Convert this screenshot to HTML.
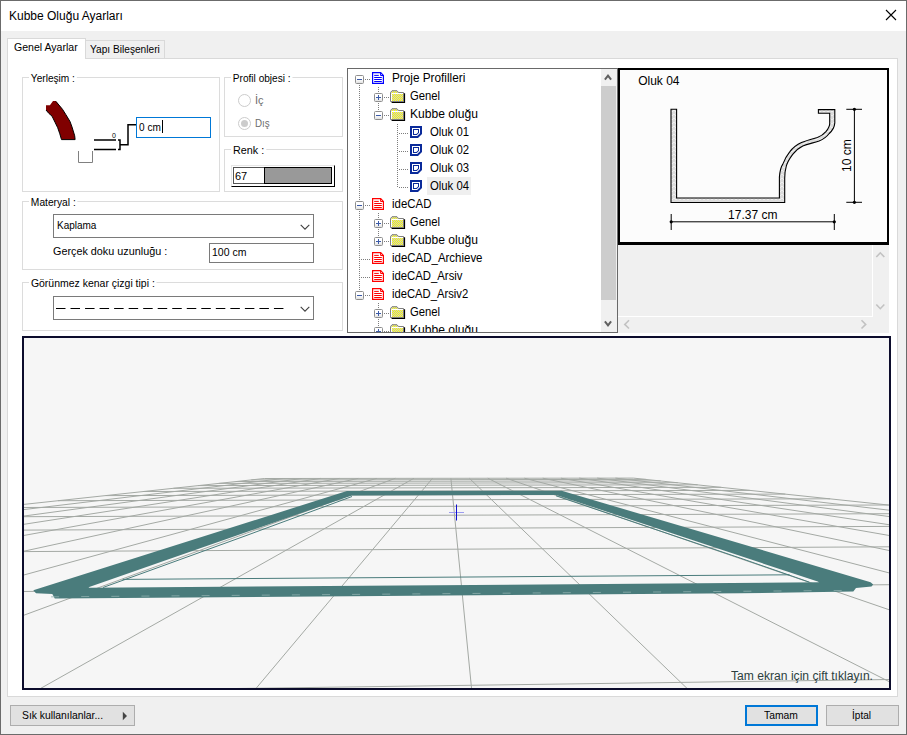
<!DOCTYPE html>
<html lang="tr"><head><meta charset="utf-8"><title>Kubbe Oluğu Ayarları</title>
<style>
*{box-sizing:border-box;margin:0;padding:0}
html,body{width:907px;height:735px;overflow:hidden;background:#f0f0f0}
body{position:relative;font-family:"Liberation Sans",sans-serif;font-size:11px;color:#000}
.a{position:absolute}
.t{position:absolute;white-space:nowrap;line-height:1}
#win{left:0;top:0;width:907px;height:735px;border:1px solid #6b6b6b;background:#f0f0f0}
#title{left:1px;top:1px;width:905px;height:30px;background:#fff}
#pane{left:7px;top:58px;width:891px;height:639px;background:#fff;border:1px solid #d9d9d9}
.tab{border:1px solid #d9d9d9;border-bottom:none}
.gb{position:absolute;border:1px solid #dcdcdc}
.gl{position:absolute;background:#fff;white-space:nowrap;line-height:1;padding:0 2px}
.inp{position:absolute;background:#fff;border:1px solid #7a7a7a}
.btn{position:absolute;background:#e1e1e1;border:1px solid #adadad}
.tr{position:absolute;white-space:nowrap;line-height:1;font-size:12px}
</style></head><body>
<div id="win" class="a"></div>
<div id="title" class="a"></div>
<div class="t" id="ttl" style="left:9px;top:10px;font-size:12px">Kubbe Oluğu Ayarları</div>
<svg class="a" style="left:885px;top:9px" width="12" height="12" viewBox="0 0 12 12"><path d="M1 1L11 11M11 1L1 11" stroke="#000" stroke-width="1.1" fill="none"/></svg>

<!-- tab control -->
<div id="pane" class="a"></div>
<div class="a tab" style="left:85px;top:40px;width:80px;height:18px;background:#f0f0f0"></div>
<div class="a tab" style="left:7px;top:38px;width:79px;height:21px;background:#fff"></div>
<div class="t" id="tab1" style="transform:scaleX(0.9586);transform-origin:0 0;left:14px;top:42px">Genel Ayarlar</div>
<div class="t" id="tab2" style="transform:scaleX(0.9233);transform-origin:0 0;left:90px;top:44px">Yapı Bileşenleri</div>

<!-- Yerlesim -->
<div class="gb" style="left:22px;top:77px;width:198px;height:115px"></div>
<div class="gl" id="g1" style="transform:scaleX(0.9207);transform-origin:0 0;left:29px;top:73px">Yerleşim :</div>
<svg class="a" style="left:40px;top:95px" width="100" height="75" viewBox="40 95 100 75">
<path d="M46 105.2L49.9 105.2L53 101.1L55.8 101.1L62.5 109.3L65.9 114.7L70 121.5L72 127L74.7 135.8L75.1 139.6L61.5 139.6L59.8 133.8L57.7 127.7L55 122.2L52 116.1L48.9 113.4L46 110Z" fill="#800000"/>
<path d="M55.8 101.3L62.5 109.3L65.9 114.7L70 121.5L72 127L74.7 135.8L75.1 139.6L61.5 139.6L59.8 133.8L57.7 127.7L55 122.2L52 116.1L48.9 113.4L46 110" fill="none" stroke="#000" stroke-width="1"/>
<path d="M78.5 151V162.5H92.5V151" fill="none" stroke="#808080" stroke-width="1"/>
<path d="M94 140H116M94 149.5H116" fill="none" stroke="#000" stroke-width="1.4"/>
<path d="M118 140H120V149.5H118M120 144.7H128V124.7H136" fill="none" stroke="#000" stroke-width="1.5"/>
<text x="112" y="137.5" font-size="7" font-family="Liberation Sans, sans-serif">0</text>
</svg>
<div class="inp" style="left:136px;top:117px;width:75px;height:21px;border-color:#0078d7"></div>
<div class="t" id="in1" style="transform:scaleX(0.9144);transform-origin:0 0;left:139px;top:122px">0 cm</div>
<div class="a" style="left:162px;top:120px;width:1px;height:13px;background:#000"></div>

<!-- Profil objesi -->
<div class="gb" style="left:224px;top:77px;width:119px;height:60px"></div>
<div class="gl" id="g2" style="transform:scaleX(0.9175);transform-origin:0 0;left:231px;top:73px">Profil objesi :</div>
<div class="a" style="left:238px;top:94px;width:13px;height:13px;border:1px solid #cccccc;border-radius:50%;background:#fff"></div>
<div class="t" id="r1" style="left:255px;top:95px;color:#6d6d6d">İç</div>
<div class="a" style="left:238px;top:117px;width:13px;height:13px;border:1px solid #cccccc;border-radius:50%;background:#fff"></div>
<div class="a" style="left:241px;top:120px;width:7px;height:7px;border-radius:50%;background:#cccccc"></div>
<div class="t" id="r2" style="transform:scaleX(0.8909);transform-origin:0 0;left:255px;top:118px;color:#6d6d6d">Dış</div>

<!-- Renk -->
<div class="gb" style="left:224px;top:149px;width:119px;height:43px"></div>
<div class="gl" id="g3" style="transform:scaleX(0.9811);transform-origin:0 0;left:231px;top:145px">Renk :</div>
<div class="a" style="left:231px;top:165px;width:104px;height:22px;background:#fff;border-top:1px solid #e6e6e6;border-left:1px solid #e6e6e6;border-right:1px solid #000;border-bottom:1px solid #000"></div>
<div class="a" style="left:233px;top:167px;width:32px;height:17px;background:#fff;border:1px solid #555;border-right:none"></div>
<div class="a" style="left:264px;top:167px;width:68px;height:17px;background:#999;border:1px solid #000"></div>
<div class="t" id="c67" style="left:235px;top:171px">67</div>

<!-- Materyal -->
<div class="gb" style="left:22px;top:201px;width:321px;height:69px"></div>
<div class="gl" id="g4" style="transform:scaleX(0.9296);transform-origin:0 0;left:29px;top:197px">Materyal :</div>
<div class="inp" style="left:53px;top:214px;width:261px;height:24px"></div>
<div class="t" id="kap" style="transform:scaleX(0.9078);transform-origin:0 0;left:57px;top:220px">Kaplama</div>
<svg class="a" style="left:299px;top:223px" width="12" height="8" viewBox="0 0 12 8"><path d="M1.7 1.8L6 6.1L10.3 1.8" fill="none" stroke="#404040" stroke-width="1.1"/></svg>
<div class="t" id="ger" style="transform:scaleX(0.9828);transform-origin:0 0;left:53px;top:246px">Gerçek doku uzunluğu :</div>
<div class="inp" style="left:209px;top:243px;width:105px;height:20px"></div>
<div class="t" id="c100" style="transform:scaleX(0.9534);transform-origin:0 0;left:212px;top:247px">100 cm</div>

<!-- Gorunmez -->
<div class="gb" style="left:22px;top:282px;width:321px;height:49px"></div>
<div class="gl" id="g5" style="transform:scaleX(0.9516);transform-origin:0 0;left:29px;top:278px">Görünmez kenar çizgi tipi :</div>
<div class="inp" style="left:53px;top:296px;width:261px;height:24px"></div>
<svg class="a" style="left:54px;top:304px" width="240" height="9" viewBox="0 0 240 9"><path d="M2 4.5H230" stroke="#000" stroke-width="1" stroke-dasharray="9.5 5.03" fill="none"/></svg>
<svg class="a" style="left:299px;top:305px" width="12" height="8" viewBox="0 0 12 8"><path d="M1.7 1.8L6 6.1L10.3 1.8" fill="none" stroke="#404040" stroke-width="1.1"/></svg>

<div class="a" style="left:347px;top:68px;width:271px;height:265px;background:#fff;border:1px solid #696969;overflow:hidden">
<div class="a" style="left:11px;top:16px;width:1px;height:206px;background:repeating-linear-gradient(to bottom,#7d7d7d 0 1px,transparent 1px 2px)"></div>
<div class="a" style="left:30px;top:18px;width:1px;height:24px;background:repeating-linear-gradient(to bottom,#7d7d7d 0 1px,transparent 1px 2px)"></div>
<div class="a" style="left:49px;top:55px;width:1px;height:64px;background:repeating-linear-gradient(to bottom,#7d7d7d 0 1px,transparent 1px 2px)"></div>
<div class="a" style="left:30px;top:144px;width:1px;height:24px;background:repeating-linear-gradient(to bottom,#7d7d7d 0 1px,transparent 1px 2px)"></div>
<div class="a" style="left:30px;top:234px;width:1px;height:32px;background:repeating-linear-gradient(to bottom,#7d7d7d 0 1px,transparent 1px 2px)"></div>
<div class="a" style="left:17px;top:10px;height:1px;width:5px;background:repeating-linear-gradient(to right,#7d7d7d 0 1px,transparent 1px 2px)"></div>
<div class="a" style="left:7px;top:6px;width:9px;height:9px;border:1px solid #8e8e8e;border-radius:1.5px;background:linear-gradient(#fff 45%,#e2e2e2)"><div class="a" style="left:1px;top:3px;width:5px;height:1px;background:#3b5aa8"></div></div>
<svg class="a" style="left:24px;top:3px" width="12" height="12" viewBox="0 0 12 12"><path d="M0.6 0.6H8.7L11.4 3.4V11.4H0.6Z" fill="#fff" stroke="#0000ff" stroke-width="1.2"/><path d="M8.6 0.8V3.5H11.3" fill="none" stroke="#0000ff" stroke-width="1"/><path d="M2.2 3.4H6.8M2.2 5.5H9.8M2.2 7.5H9.8M2.2 9.5H9.8" stroke="#0000ff" stroke-width="1" fill="none"/></svg>
<div class="tr" id="tr0" style="left:43.6px;top:3px;transform:scaleX(0.9812);transform-origin:0 0">Proje Profilleri</div>
<div class="a" style="left:36px;top:28px;height:1px;width:5px;background:repeating-linear-gradient(to right,#7d7d7d 0 1px,transparent 1px 2px)"></div>
<div class="a" style="left:26px;top:24px;width:9px;height:9px;border:1px solid #8e8e8e;border-radius:1.5px;background:linear-gradient(#fff 45%,#e2e2e2)"><div class="a" style="left:1px;top:3px;width:5px;height:1px;background:#3b5aa8"></div><div class="a" style="left:3px;top:1px;width:1px;height:5px;background:#3b5aa8"></div></div>
<svg class="a" style="left:42px;top:21px" width="16" height="14" viewBox="0 0 16 14"><path d="M1.6 12.3H14.4V3.2" fill="none" stroke="#000" stroke-width="1.4"/><path d="M0.5 11.5V2.5L2 0.7H7L8.5 2.5H13.5V11.5Z" fill="url(#chk)" stroke="#808080" stroke-width="1"/><path d="M1.5 11V3.5H13" fill="none" stroke="#fff" stroke-width="1"/></svg>
<div class="tr" id="tr1" style="left:62.0px;top:21px;transform:scaleX(0.9397);transform-origin:0 0">Genel</div>
<div class="a" style="left:36px;top:46px;height:1px;width:5px;background:repeating-linear-gradient(to right,#7d7d7d 0 1px,transparent 1px 2px)"></div>
<div class="a" style="left:26px;top:42px;width:9px;height:9px;border:1px solid #8e8e8e;border-radius:1.5px;background:linear-gradient(#fff 45%,#e2e2e2)"><div class="a" style="left:1px;top:3px;width:5px;height:1px;background:#3b5aa8"></div></div>
<svg class="a" style="left:42px;top:39px" width="16" height="14" viewBox="0 0 16 14"><path d="M1.6 12.3H14.4V3.2" fill="none" stroke="#000" stroke-width="1.4"/><path d="M0.5 11.5V2.5L2 0.7H7L8.5 2.5H13.5V11.5Z" fill="url(#chk)" stroke="#808080" stroke-width="1"/><path d="M1.5 11V3.5H13" fill="none" stroke="#fff" stroke-width="1"/></svg>
<div class="tr" id="tr2" style="left:62.0px;top:39px;transform:scaleX(1.0073);transform-origin:0 0">Kubbe oluğu</div>
<div class="a" style="left:51px;top:64px;height:1px;width:9px;background:repeating-linear-gradient(to right,#7d7d7d 0 1px,transparent 1px 2px)"></div>
<svg class="a" style="left:62px;top:57px" width="12" height="12" viewBox="0 0 12 12"><path d="M0 0H12V8L8 12H0Z" fill="#0a2a9a"/><path d="M2 2H10V7.2L7.2 10H2Z" fill="#fff"/><path d="M3 3H9V6.8L6.8 9H3Z" fill="#0a2a9a"/><path d="M4 4H8V6.4L6.4 8H4Z" fill="#fff"/></svg>
<div class="tr" id="tr3" style="left:81.7px;top:57px;transform:scaleX(0.9430);transform-origin:0 0">Oluk 01</div>
<div class="a" style="left:51px;top:82px;height:1px;width:9px;background:repeating-linear-gradient(to right,#7d7d7d 0 1px,transparent 1px 2px)"></div>
<svg class="a" style="left:62px;top:75px" width="12" height="12" viewBox="0 0 12 12"><path d="M0 0H12V8L8 12H0Z" fill="#0a2a9a"/><path d="M2 2H10V7.2L7.2 10H2Z" fill="#fff"/><path d="M3 3H9V6.8L6.8 9H3Z" fill="#0a2a9a"/><path d="M4 4H8V6.4L6.4 8H4Z" fill="#fff"/></svg>
<div class="tr" id="tr4" style="left:81.7px;top:75px;transform:scaleX(0.9430);transform-origin:0 0">Oluk 02</div>
<div class="a" style="left:51px;top:100px;height:1px;width:9px;background:repeating-linear-gradient(to right,#7d7d7d 0 1px,transparent 1px 2px)"></div>
<svg class="a" style="left:62px;top:93px" width="12" height="12" viewBox="0 0 12 12"><path d="M0 0H12V8L8 12H0Z" fill="#0a2a9a"/><path d="M2 2H10V7.2L7.2 10H2Z" fill="#fff"/><path d="M3 3H9V6.8L6.8 9H3Z" fill="#0a2a9a"/><path d="M4 4H8V6.4L6.4 8H4Z" fill="#fff"/></svg>
<div class="tr" id="tr5" style="left:81.7px;top:93px;transform:scaleX(0.9430);transform-origin:0 0">Oluk 03</div>
<div class="a" style="left:51px;top:118px;height:1px;width:9px;background:repeating-linear-gradient(to right,#7d7d7d 0 1px,transparent 1px 2px)"></div>
<svg class="a" style="left:62px;top:111px" width="12" height="12" viewBox="0 0 12 12"><path d="M0 0H12V8L8 12H0Z" fill="#0a2a9a"/><path d="M2 2H10V7.2L7.2 10H2Z" fill="#fff"/><path d="M3 3H9V6.8L6.8 9H3Z" fill="#0a2a9a"/><path d="M4 4H8V6.4L6.4 8H4Z" fill="#fff"/></svg>
<div class="a" style="left:79px;top:108px;width:44px;height:18px;background:#efefef"></div>
<div class="tr" id="tr6" style="left:81.7px;top:111px;transform:scaleX(0.9430);transform-origin:0 0">Oluk 04</div>
<div class="a" style="left:17px;top:136px;height:1px;width:5px;background:repeating-linear-gradient(to right,#7d7d7d 0 1px,transparent 1px 2px)"></div>
<div class="a" style="left:7px;top:132px;width:9px;height:9px;border:1px solid #8e8e8e;border-radius:1.5px;background:linear-gradient(#fff 45%,#e2e2e2)"><div class="a" style="left:1px;top:3px;width:5px;height:1px;background:#3b5aa8"></div></div>
<svg class="a" style="left:24px;top:129px" width="12" height="12" viewBox="0 0 12 12"><path d="M0.6 0.6H8.7L11.4 3.4V11.4H0.6Z" fill="#fff" stroke="#ff0000" stroke-width="1.2"/><path d="M8.6 0.8V3.5H11.3" fill="none" stroke="#ff0000" stroke-width="1"/><path d="M2.2 3.4H6.8M2.2 5.5H9.8M2.2 7.5H9.8M2.2 9.5H9.8" stroke="#ff0000" stroke-width="1" fill="none"/></svg>
<div class="tr" id="tr7" style="left:43.6px;top:129px;transform:scaleX(0.9526);transform-origin:0 0">ideCAD</div>
<div class="a" style="left:36px;top:154px;height:1px;width:5px;background:repeating-linear-gradient(to right,#7d7d7d 0 1px,transparent 1px 2px)"></div>
<div class="a" style="left:26px;top:150px;width:9px;height:9px;border:1px solid #8e8e8e;border-radius:1.5px;background:linear-gradient(#fff 45%,#e2e2e2)"><div class="a" style="left:1px;top:3px;width:5px;height:1px;background:#3b5aa8"></div><div class="a" style="left:3px;top:1px;width:1px;height:5px;background:#3b5aa8"></div></div>
<svg class="a" style="left:42px;top:147px" width="16" height="14" viewBox="0 0 16 14"><path d="M1.6 12.3H14.4V3.2" fill="none" stroke="#000" stroke-width="1.4"/><path d="M0.5 11.5V2.5L2 0.7H7L8.5 2.5H13.5V11.5Z" fill="url(#chk)" stroke="#808080" stroke-width="1"/><path d="M1.5 11V3.5H13" fill="none" stroke="#fff" stroke-width="1"/></svg>
<div class="tr" id="tr8" style="left:62.0px;top:147px;transform:scaleX(0.9397);transform-origin:0 0">Genel</div>
<div class="a" style="left:36px;top:172px;height:1px;width:5px;background:repeating-linear-gradient(to right,#7d7d7d 0 1px,transparent 1px 2px)"></div>
<div class="a" style="left:26px;top:168px;width:9px;height:9px;border:1px solid #8e8e8e;border-radius:1.5px;background:linear-gradient(#fff 45%,#e2e2e2)"><div class="a" style="left:1px;top:3px;width:5px;height:1px;background:#3b5aa8"></div><div class="a" style="left:3px;top:1px;width:1px;height:5px;background:#3b5aa8"></div></div>
<svg class="a" style="left:42px;top:165px" width="16" height="14" viewBox="0 0 16 14"><path d="M1.6 12.3H14.4V3.2" fill="none" stroke="#000" stroke-width="1.4"/><path d="M0.5 11.5V2.5L2 0.7H7L8.5 2.5H13.5V11.5Z" fill="url(#chk)" stroke="#808080" stroke-width="1"/><path d="M1.5 11V3.5H13" fill="none" stroke="#fff" stroke-width="1"/></svg>
<div class="tr" id="tr9" style="left:62.0px;top:165px;transform:scaleX(1.0073);transform-origin:0 0">Kubbe oluğu</div>
<div class="a" style="left:13px;top:190px;height:1px;width:9px;background:repeating-linear-gradient(to right,#7d7d7d 0 1px,transparent 1px 2px)"></div>
<svg class="a" style="left:24px;top:183px" width="12" height="12" viewBox="0 0 12 12"><path d="M0.6 0.6H8.7L11.4 3.4V11.4H0.6Z" fill="#fff" stroke="#ff0000" stroke-width="1.2"/><path d="M8.6 0.8V3.5H11.3" fill="none" stroke="#ff0000" stroke-width="1"/><path d="M2.2 3.4H6.8M2.2 5.5H9.8M2.2 7.5H9.8M2.2 9.5H9.8" stroke="#ff0000" stroke-width="1" fill="none"/></svg>
<div class="tr" id="tr10" style="left:43.6px;top:183px;transform:scaleX(0.9555);transform-origin:0 0">ideCAD_Archieve</div>
<div class="a" style="left:13px;top:208px;height:1px;width:9px;background:repeating-linear-gradient(to right,#7d7d7d 0 1px,transparent 1px 2px)"></div>
<svg class="a" style="left:24px;top:201px" width="12" height="12" viewBox="0 0 12 12"><path d="M0.6 0.6H8.7L11.4 3.4V11.4H0.6Z" fill="#fff" stroke="#ff0000" stroke-width="1.2"/><path d="M8.6 0.8V3.5H11.3" fill="none" stroke="#ff0000" stroke-width="1"/><path d="M2.2 3.4H6.8M2.2 5.5H9.8M2.2 7.5H9.8M2.2 9.5H9.8" stroke="#ff0000" stroke-width="1" fill="none"/></svg>
<div class="tr" id="tr11" style="left:43.6px;top:201px;transform:scaleX(0.9437);transform-origin:0 0">ideCAD_Arsiv</div>
<div class="a" style="left:17px;top:226px;height:1px;width:5px;background:repeating-linear-gradient(to right,#7d7d7d 0 1px,transparent 1px 2px)"></div>
<div class="a" style="left:7px;top:222px;width:9px;height:9px;border:1px solid #8e8e8e;border-radius:1.5px;background:linear-gradient(#fff 45%,#e2e2e2)"><div class="a" style="left:1px;top:3px;width:5px;height:1px;background:#3b5aa8"></div></div>
<svg class="a" style="left:24px;top:219px" width="12" height="12" viewBox="0 0 12 12"><path d="M0.6 0.6H8.7L11.4 3.4V11.4H0.6Z" fill="#fff" stroke="#ff0000" stroke-width="1.2"/><path d="M8.6 0.8V3.5H11.3" fill="none" stroke="#ff0000" stroke-width="1"/><path d="M2.2 3.4H6.8M2.2 5.5H9.8M2.2 7.5H9.8M2.2 9.5H9.8" stroke="#ff0000" stroke-width="1" fill="none"/></svg>
<div class="tr" id="tr12" style="left:43.6px;top:219px;transform:scaleX(0.9364);transform-origin:0 0">ideCAD_Arsiv2</div>
<div class="a" style="left:36px;top:244px;height:1px;width:5px;background:repeating-linear-gradient(to right,#7d7d7d 0 1px,transparent 1px 2px)"></div>
<div class="a" style="left:26px;top:240px;width:9px;height:9px;border:1px solid #8e8e8e;border-radius:1.5px;background:linear-gradient(#fff 45%,#e2e2e2)"><div class="a" style="left:1px;top:3px;width:5px;height:1px;background:#3b5aa8"></div><div class="a" style="left:3px;top:1px;width:1px;height:5px;background:#3b5aa8"></div></div>
<svg class="a" style="left:42px;top:237px" width="16" height="14" viewBox="0 0 16 14"><path d="M1.6 12.3H14.4V3.2" fill="none" stroke="#000" stroke-width="1.4"/><path d="M0.5 11.5V2.5L2 0.7H7L8.5 2.5H13.5V11.5Z" fill="url(#chk)" stroke="#808080" stroke-width="1"/><path d="M1.5 11V3.5H13" fill="none" stroke="#fff" stroke-width="1"/></svg>
<div class="tr" id="tr13" style="left:62.0px;top:237px;transform:scaleX(0.9397);transform-origin:0 0">Genel</div>
<div class="a" style="left:36px;top:262px;height:1px;width:5px;background:repeating-linear-gradient(to right,#7d7d7d 0 1px,transparent 1px 2px)"></div>
<div class="a" style="left:26px;top:258px;width:9px;height:9px;border:1px solid #8e8e8e;border-radius:1.5px;background:linear-gradient(#fff 45%,#e2e2e2)"><div class="a" style="left:1px;top:3px;width:5px;height:1px;background:#3b5aa8"></div><div class="a" style="left:3px;top:1px;width:1px;height:5px;background:#3b5aa8"></div></div>
<svg class="a" style="left:42px;top:255px" width="16" height="14" viewBox="0 0 16 14"><path d="M1.6 12.3H14.4V3.2" fill="none" stroke="#000" stroke-width="1.4"/><path d="M0.5 11.5V2.5L2 0.7H7L8.5 2.5H13.5V11.5Z" fill="url(#chk)" stroke="#808080" stroke-width="1"/><path d="M1.5 11V3.5H13" fill="none" stroke="#fff" stroke-width="1"/></svg>
<div class="tr" id="tr14" style="left:62.0px;top:255px;transform:scaleX(1.0073);transform-origin:0 0">Kubbe oluğu</div>
<svg width="0" height="0" style="position:absolute"><defs><pattern id="chk" width="2" height="2" patternUnits="userSpaceOnUse"><rect width="2" height="2" fill="#c6c6d6"/><rect width="1" height="1" fill="#ffff00"/><rect x="1" y="1" width="1" height="1" fill="#ffff00"/></pattern></defs></svg>
<div class="a" style="left:253px;top:0;width:17px;height:263px;background:#f0f0f0"></div>
<div class="a" style="left:253px;top:17px;width:15px;height:214px;background:#cdcdcd"></div>
<svg class="a" style="left:255px;top:4px" width="10" height="8" viewBox="0 0 10 8"><path d="M1.9 6.6L5 2.6L8.1 6.6" fill="none" stroke="#606060" stroke-width="2"/></svg>
<svg class="a" style="left:255px;top:251px" width="10" height="8" viewBox="0 0 10 8"><path d="M1.9 1.4L5 5.4L8.1 1.4" fill="none" stroke="#606060" stroke-width="2"/></svg>
</div>
<!-- preview box -->
<div class="a" style="left:618px;top:68px;width:271px;height:177px;background:#fcfcfc;border:2px solid #000;border-bottom-width:3px"></div>
<svg class="a" style="left:620px;top:70px" width="268" height="172" viewBox="620 70 268 172" font-family="Liberation Sans, sans-serif" font-size="12">
<defs><pattern id="hat" width="4" height="4" patternUnits="userSpaceOnUse"><rect width="4" height="4" fill="#dcdcdc"/><path d="M0 4L2 2L4 4" stroke="#f4f4f4" stroke-width="0.8" fill="none"/></pattern></defs>
<path d="M671 109.3H676.6V198H779.4V177C780 170 781.5 166 782.7 164.4C785 158 787.5 154.5 789.7 151.8C793 147.5 797 144.5 801.5 142.5C806 140.5 812 139 817.4 137.5C821.5 136 824 134 825.9 131.7C828 129 829.7 126 829.7 123.4V113.3H818.4V109.6H834.8V122.9C834.5 127 832 131 829.2 133.5C826.5 137 823 139.5 819.1 141C813 143 808 144 802.8 146C798.5 148 795.5 151 792.7 154.4C790 158 787.5 162 786.4 165.7C785.3 169.5 784.7 174 784.7 178.3V202.5H671Z" fill="url(#hat)" stroke="#000" stroke-width="1.1" stroke-linejoin="miter"/>
<path d="M671.2 214V230M834.3 214V230M671.2 221.8H834.3" stroke="#000" stroke-width="1" fill="none"/>
<circle cx="671.2" cy="221.8" r="1.6"/><circle cx="834.3" cy="221.8" r="1.6"/>
<path d="M846.3 109.3H862M846.3 202.3H862M854.4 109.3V202.3" stroke="#000" stroke-width="1" fill="none"/>
<circle cx="854.4" cy="109.3" r="1.6"/><circle cx="854.4" cy="202.3" r="1.6"/>
<text x="638.2" y="84.6">Oluk 04</text>
<text x="752.8" y="218.5" text-anchor="middle">17.37 cm</text>
<text transform="translate(851 155.7) rotate(-90)" text-anchor="middle">10 cm</text>
</svg>
<!-- empty list below preview -->
<div class="a" style="left:618px;top:245px;width:271px;height:88px;background:#f0f0f0"></div>
<div class="a" style="left:618px;top:316px;width:255px;height:1px;background:#fff"></div>
<div class="a" style="left:872px;top:245px;width:1px;height:72px;background:#fff"></div>
<svg class="a" style="left:618px;top:245px" width="271" height="88" viewBox="618 245 271 88"><g fill="none" stroke="#c2c2c2" stroke-width="1.6">
<path d="M876.3 257L880.3 252.8L884.3 257"/><path d="M876.3 304.5L880.3 308.7L884.3 304.5"/>
<path d="M629 320.3L624.8 324.4L629 328.5"/><path d="M861.5 320.3L865.7 324.4L861.5 328.5"/></g></svg>

<!-- 3D view -->
<div class="a" style="left:22px;top:336px;width:869px;height:354px;background:#f6f6f6;border:2px solid #0c0c2c"></div>
<svg class="a" style="left:24px;top:338px" width="865" height="350" viewBox="24 338 865 350">
<path d="M264.3 478.5L22.0 504.6M283.2 478.5L22.0 509.8M302.0 478.5L22.0 516.3M320.7 478.4L22.0 524.6M339.5 478.4L22.0 535.8M358.2 478.4L22.0 551.6M376.8 478.4L22.0 575.5M395.4 478.3L22.0 615.9M413.9 478.3L37.8 690.0M432.5 478.3L254.7 690.0M450.9 478.3L471.7 690.0M469.4 478.3L688.7 690.0M487.8 478.2L891.0 682.6M506.1 478.2L891.0 610.4M524.4 478.2L891.0 573.4M542.7 478.2L891.0 550.9M560.9 478.2L891.0 535.8M579.1 478.1L891.0 525.0M597.2 478.1L891.0 516.8M615.4 478.1L891.0 510.4M633.4 478.1L891.0 505.3M128.2 690.0L891.0 679.5M22.0 591.5L891.0 584.7M22.0 551.6L891.0 546.8M22.0 530.1L891.0 526.4M22.0 516.7L891.0 513.7M22.0 507.5L888.7 505.0M58.0 500.7L830.1 498.8M105.9 495.6L785.3 494.1M143.4 491.5L749.9 490.4M173.4 488.3L721.2 487.3M198.1 485.6L697.6 484.8M218.8 483.4L677.7 482.7M236.3 481.5L660.7 480.9M251.3 479.9L646.1 479.4M264.3 478.5L633.4 478.1" fill="none" stroke="#a4a9a4" stroke-width="1"/>

<path fill="#4a7c7c" fill-rule="evenodd" d="M33.3 590.3L346.9 491L561.7 490.7L870.6 582.2L873.2 584.4L871.5 586.6L856 588L853.3 591.4L740 593.3L54.8 598.4L52.3 594L36 593.2ZM351.8 495.4L556.2 494.9L817.7 581.6L819 582.3L89.5 587.8L88.5 587.2Z"/>
<g fill="none" stroke="#4a7c7c" stroke-width="1">
<path d="M352 496.5L245 536L103 587.5"/>
<path d="M556 495.8L740 558L809.5 582.2"/>
<path d="M122.6 579.4L789.6 574.8"/>
</g>
<path d="M51.1 596.85L852 590.4" stroke="#8fb0ae" stroke-width="0.8" stroke-dasharray="8 22.1" fill="none"/>
<path d="M449 512.5H464" stroke="#9c9cf0" stroke-width="1"/><path d="M456.5 504.5V520.5" stroke="#1010d0" stroke-width="1"/>
</svg>
<div class="t" id="hint" style="left:731px;top:670px;font-size:12px;color:#2c4040;transform:scaleX(1.009);transform-origin:0 0">Tam ekran için çift tıklayın.</div>


<!-- buttons -->
<div class="btn" style="left:10px;top:705px;width:125px;height:21px"></div>
<div class="t" id="b1" style="transform:scaleX(0.9408);transform-origin:0 0;left:22px;top:710px">Sık kullanılanlar...</div>
<svg class="a" style="left:122px;top:711px" width="6" height="10" viewBox="0 0 6 10"><path d="M0.8 0.8L5 5L0.8 9.2Z" fill="#444"/></svg>
<div class="btn" style="left:745px;top:705px;width:73px;height:21px;border:2px solid #0078d7"></div>
<div class="t" id="b2" style="transform:scaleX(0.9373);transform-origin:0 0;left:764px;top:710px">Tamam</div>
<div class="btn" style="left:826px;top:705px;width:73px;height:21px"></div>
<div class="t" id="b3" style="transform:scaleX(0.9135);transform-origin:0 0;left:852px;top:710px">İptal</div>
</body></html>
